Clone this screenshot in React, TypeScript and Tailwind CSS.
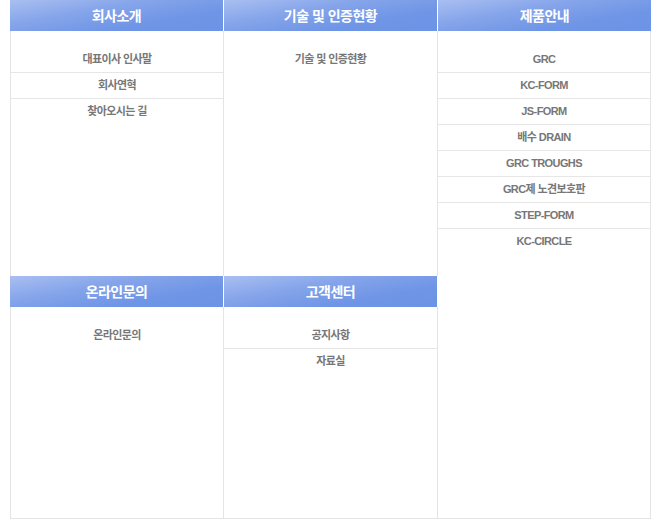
import React from "react";

const font = { fontFamily: '"Liberation Sans", "Noto Sans CJK KR", sans-serif' };

function Header({ title }: { title: string }) {
  return (
    <div className="h-[31px] w-[213px] flex items-center justify-center bg-[linear-gradient(170deg,#a9bff1_0%,#86a5ea_35%,#6f95e6_70%,#6c93e5_100%)]">
      <span className="text-white font-bold text-[14px] tracking-[-0.5px] leading-none">{title}</span>
    </div>
  );
}

function Items({ items }: { items: string[] }) {
  return (
    <ul className="pt-[16px]">
      {items.map((t, i) => (
        <li
          key={t}
          className={
            "h-[26px] flex items-center justify-center text-[11px] font-bold text-[#777] tracking-[-0.6px] " +
            (i < items.length - 1 ? "border-b border-[#e6e6e6]" : "")
          }
        >
          <span className="pb-[1px]">{t}</span>
        </li>
      ))}
    </ul>
  );
}

export default function App() {
  return (
    <div className="bg-white w-[661px] h-[529px]" style={font}>
      <div className="ml-[10px] w-[641px] flex">
        {/* Column 1 */}
        <div className="w-[214px] flex flex-col">
          <Header title="회사소개" />
          <div className="h-[245px] border-l border-r border-[#e4e4e4]">
            <Items items={["대표이사 인사말", "회사연혁", "찾아오시는 길"]} />
          </div>
          <Header title="온라인문의" />
          <div className="h-[212px] border-l border-r border-b border-[#e4e4e4]">
            <Items items={["온라인문의"]} />
          </div>
        </div>
        {/* Column 2 */}
        <div className="w-[214px] flex flex-col">
          <Header title="기술 및 인증현황" />
          <div className="h-[245px] border-r border-[#e4e4e4]">
            <Items items={["기술 및 인증현황"]} />
          </div>
          <Header title="고객센터" />
          <div className="h-[212px] border-r border-b border-[#e4e4e4]">
            <Items items={["공지사항", "자료실"]} />
          </div>
        </div>
        {/* Column 3 */}
        <div className="w-[213px] flex flex-col">
          <Header title="제품안내" />
          <div className="h-[488px] border-r border-b border-[#e4e4e4]">
            <Items
              items={[
                "GRC",
                "KC-FORM",
                "JS-FORM",
                "배수 DRAIN",
                "GRC TROUGHS",
                "GRC제 노견보호판",
                "STEP-FORM",
                "KC-CIRCLE",
              ]}
            />
          </div>
        </div>
      </div>
    </div>
  );
}
